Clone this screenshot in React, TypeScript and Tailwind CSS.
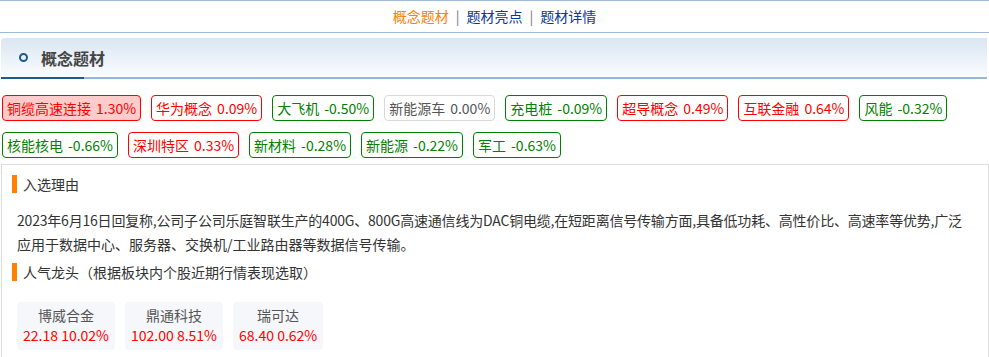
const tags = [
  { name: '铜缆高速连接', pct: '1.30%', kind: 'hot' },
  { name: '华为概念', pct: '0.09%', kind: 'up' },
  { name: '大飞机', pct: '-0.50%', kind: 'down' },
  { name: '新能源车', pct: '0.00%', kind: 'flat' },
  { name: '充电桩', pct: '-0.09%', kind: 'down' },
  { name: '超导概念', pct: '0.49%', kind: 'up' },
  { name: '互联金融', pct: '0.64%', kind: 'up' },
  { name: '风能', pct: '-0.32%', kind: 'down' },
  { name: '核能核电', pct: '-0.66%', kind: 'down' },
  { name: '深圳特区', pct: '0.33%', kind: 'up' },
  { name: '新材料', pct: '-0.28%', kind: 'down' },
  { name: '新能源', pct: '-0.22%', kind: 'down' },
  { name: '军工', pct: '-0.63%', kind: 'down' },
]

const tagStyle: Record<string, string> = {
  hot: 'border-[#ff0000] bg-[#ffcccc] text-[#ff0000]',
  up: 'border-[#ff0000] bg-white text-[#ff0000]',
  down: 'border-[#008000] bg-white text-[#008000]',
  flat: 'border-[#d9d9d9] bg-white text-[#555]',
}

const leaders = [
  { name: '博威合金', price: '22.18', pct: '10.02%' },
  { name: '鼎通科技', price: '102.00', pct: '8.51%' },
  { name: '瑞可达', price: '68.40', pct: '0.62%' },
]

function SubTitle({ children }: { children: React.ReactNode }) {
  return (
    <div className="flex items-center gap-[6px] pl-[10px]">
      <span className="h-[18px] w-[5px] bg-[#ff8000]" />
      <span className="text-[14px] leading-[18px] text-[#333]">{children}</span>
    </div>
  )
}

export default function App() {
  return (
    <div className="w-[989px] bg-white font-['Noto_Sans_CJK_SC',sans-serif]">
      {/* top nav */}
      <div className="flex h-[33px] items-center justify-center border-y border-[#9dbbd6] text-[14px]">
        <a className="text-[#ff8000]">概念题材</a>
        <span className="mx-[7px] text-[#777]">|</span>
        <a className="text-[#0b3a94]">题材亮点</a>
        <span className="mx-[7px] text-[#777]">|</span>
        <a className="text-[#0b3a94]">题材详情</a>
      </div>

      {/* section header */}
      <div className="ml-[1px] mr-[2px] mt-[5px]">
        <div className="flex h-[39px] items-center rounded-tl-[4px] bg-gradient-to-b from-[#dae6f2] to-[#fafcfe] pl-[18px]">
          <span className="box-border h-[9px] w-[9px] rounded-full border-2 border-[#1d5a85]" />
          <span className="ml-[13px] text-[16px] font-bold text-[#444]">概念题材</span>
        </div>
        <div className="flex h-[2px]">
          <div className="w-[83px] bg-[#1e5b86]" />
          <div className="flex-1 bg-[#94b9d6]" />
        </div>
      </div>

      {/* concept tags */}
      <div className="flex flex-wrap gap-x-[10px] gap-y-[11px] px-[2px] pt-[16px]">
        {tags.map((t) => (
          <div
            key={t.name}
            className={`flex h-[26px] items-center rounded-[4px] border px-[4px] text-[14px] leading-[24px] ${tagStyle[t.kind]}`}
          >
            <span>{t.name}</span>
            <span className="ml-[5px]">{t.pct}</span>
          </div>
        ))}
      </div>

      {/* detail box */}
      <div className="ml-[1px] mt-[6px] h-[193px] w-[988px] border border-b-0 border-[#dddddd] pt-[10px]">
        <SubTitle>入选理由</SubTitle>
        <div className="mt-[15px] px-[15px] text-[14px] leading-[24px] text-[#333]">
          <p className="whitespace-nowrap tracking-[-0.2px]">
            2023年6月16日回复称,公司子公司乐庭智联生产的400G、800G高速通信线为DAC铜电缆,在短距离信号传输方面,具备低功耗、高性价比、高速率等优势,广泛
          </p>
          <p className="whitespace-nowrap">应用于数据中心、服务器、交换机/工业路由器等数据信号传输。</p>
        </div>
        <div className="mt-[7px]">
          <SubTitle>人气龙头（根据板块内个股近期行情表现选取）</SubTitle>
        </div>
        <div className="mt-[21px] flex gap-[10px] px-[15px]">
          {leaders.map((s) => (
            <div key={s.name} className="flex h-[48px] flex-col items-center rounded-[4px] bg-[#f5f7fa] px-[6px] pt-[3px]">
              <span className="text-[14px] leading-[20px] text-[#555]">{s.name}</span>
              <span className="text-[14px] leading-[20px] text-[#ff0000]">
                {s.price} {s.pct}
              </span>
            </div>
          ))}
        </div>
      </div>
    </div>
  )
}
